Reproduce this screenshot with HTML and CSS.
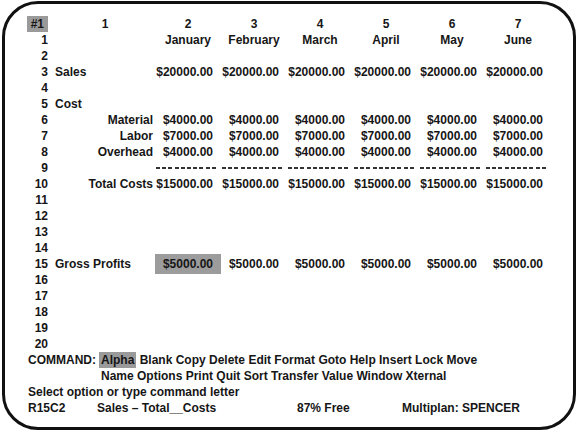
FILE: index.html
```html
<!DOCTYPE html>
<html lang="en">
<head>
<meta charset="UTF-8" />
<title>Multiplan: SPENCER</title>
<link rel="stylesheet" href="styles.css">
</head>
<body>
<div class="screen">
  <div class="sheet">
    <div class="row head">
      <div class="num"><span class="cur">#1</span></div>
      <div class="c1 mid">1</div>
      <div class="mid">2</div><div class="mid">3</div><div class="mid">4</div>
      <div class="mid">5</div><div class="mid">6</div><div class="mid">7</div>
    </div>
    <div class="row">
      <div class="num">1</div><div class="c1"></div>
      <div class="mid">January</div><div class="mid">February</div><div class="mid">March</div>
      <div class="mid">April</div><div class="mid">May</div><div class="mid">June</div>
    </div>
    <div class="row"><div class="num">2</div></div>
    <div class="row">
      <div class="num">3</div><div class="c1">Sales</div>
      <div class="val">$20000.00</div><div class="val">$20000.00</div><div class="val">$20000.00</div>
      <div class="val">$20000.00</div><div class="val">$20000.00</div><div class="val">$20000.00</div>
    </div>
    <div class="row"><div class="num">4</div></div>
    <div class="row"><div class="num">5</div><div class="c1">Cost</div></div>
    <div class="row">
      <div class="num">6</div><div class="c1 right">Material</div>
      <div class="val">$4000.00</div><div class="val">$4000.00</div><div class="val">$4000.00</div>
      <div class="val">$4000.00</div><div class="val">$4000.00</div><div class="val">$4000.00</div>
    </div>
    <div class="row">
      <div class="num">7</div><div class="c1 right">Labor</div>
      <div class="val">$7000.00</div><div class="val">$7000.00</div><div class="val">$7000.00</div>
      <div class="val">$7000.00</div><div class="val">$7000.00</div><div class="val">$7000.00</div>
    </div>
    <div class="row">
      <div class="num">8</div><div class="c1 right">Overhead</div>
      <div class="val">$4000.00</div><div class="val">$4000.00</div><div class="val">$4000.00</div>
      <div class="val">$4000.00</div><div class="val">$4000.00</div><div class="val">$4000.00</div>
    </div>
    <div class="row">
      <div class="num">9</div><div class="c1"></div>
      <div class="dash"></div><div class="dash"></div><div class="dash"></div>
      <div class="dash"></div><div class="dash"></div><div class="dash"></div>
    </div>
    <div class="row">
      <div class="num">10</div><div class="c1 right">Total Costs</div>
      <div class="val">$15000.00</div><div class="val">$15000.00</div><div class="val">$15000.00</div>
      <div class="val">$15000.00</div><div class="val">$15000.00</div><div class="val">$15000.00</div>
    </div>
    <div class="row"><div class="num">11</div></div>
    <div class="row"><div class="num">12</div></div>
    <div class="row"><div class="num">13</div></div>
    <div class="row"><div class="num">14</div></div>
    <div class="row">
      <div class="num">15</div><div class="c1">Gross Profits</div>
      <div class="val sel">$5000.00</div><div class="val">$5000.00</div><div class="val">$5000.00</div>
      <div class="val">$5000.00</div><div class="val">$5000.00</div><div class="val">$5000.00</div>
    </div>
    <div class="row"><div class="num">16</div></div>
    <div class="row"><div class="num">17</div></div>
    <div class="row"><div class="num">18</div></div>
    <div class="row"><div class="num">19</div></div>
    <div class="row"><div class="num">20</div></div>
  </div>

  <div class="cmd">
    <div class="menu">
      <div class="label">COMMAND:</div>
      <div class="opts">
        <div><span class="hl">Alpha</span> Blank Copy Delete Edit Format Goto Help Insert Lock Move</div>
        <div class="more">Name Options Print Quit Sort Transfer Value Window Xternal</div>
      </div>
    </div>
    <div class="msg">Select option or type command letter</div>
    <div class="status">
      <span>R15C2</span>
      <span>Sales – Total__Costs</span>
      <span>87% Free</span>
      <span>Multiplan: SPENCER</span>
    </div>
  </div>
</div>
</body>
</html>
```

FILE: styles.css
```css
html,body {margin:0;padding:0;background:#fff;}
body {font-family:"Liberation Sans",Arial,sans-serif;font-size:12px;font-weight:bold;color:#161616;}

.screen {
  box-sizing:border-box;width:574px;height:429px;margin:1px 2px;
  border:3px solid #111;border-radius:36px;padding-top:12px;line-height:16px;
}

/* spreadsheet grid: row numbers, label column, six month columns */
.sheet .row {display:grid;grid-template-columns:43px 107px repeat(6,66px);height:16px;}
.num {text-align:right;}
.c1 {padding-left:7px;}
.c1.right {text-align:right;padding-right:2px;}
.mid {text-align:center;}
.c1.mid {padding-left:7px;}
.val {text-align:right;padding-right:8px;}
.val.sel {background:#9c9c9c;box-shadow:0 -2px 0 #9c9c9c,0 2px 0 #9c9c9c;}
.cur {display:inline-block;background:#9a9a9a;padding:0 4px;}
.dash {
  margin:7px 3px 0 1px;height:2px;
  background:repeating-linear-gradient(90deg,#333 0,#333 4px,transparent 4px,transparent 6.2px);
}

/* command area under the sheet */
.cmd {padding-left:23px;}
.menu {display:flex;}
.menu .label {width:71px;}
.hl {background:#9a9a9a;padding:1px 2px;}
.more {padding-left:2px;}
.status {display:grid;grid-template-columns:69px 200px 105px auto;}
```
